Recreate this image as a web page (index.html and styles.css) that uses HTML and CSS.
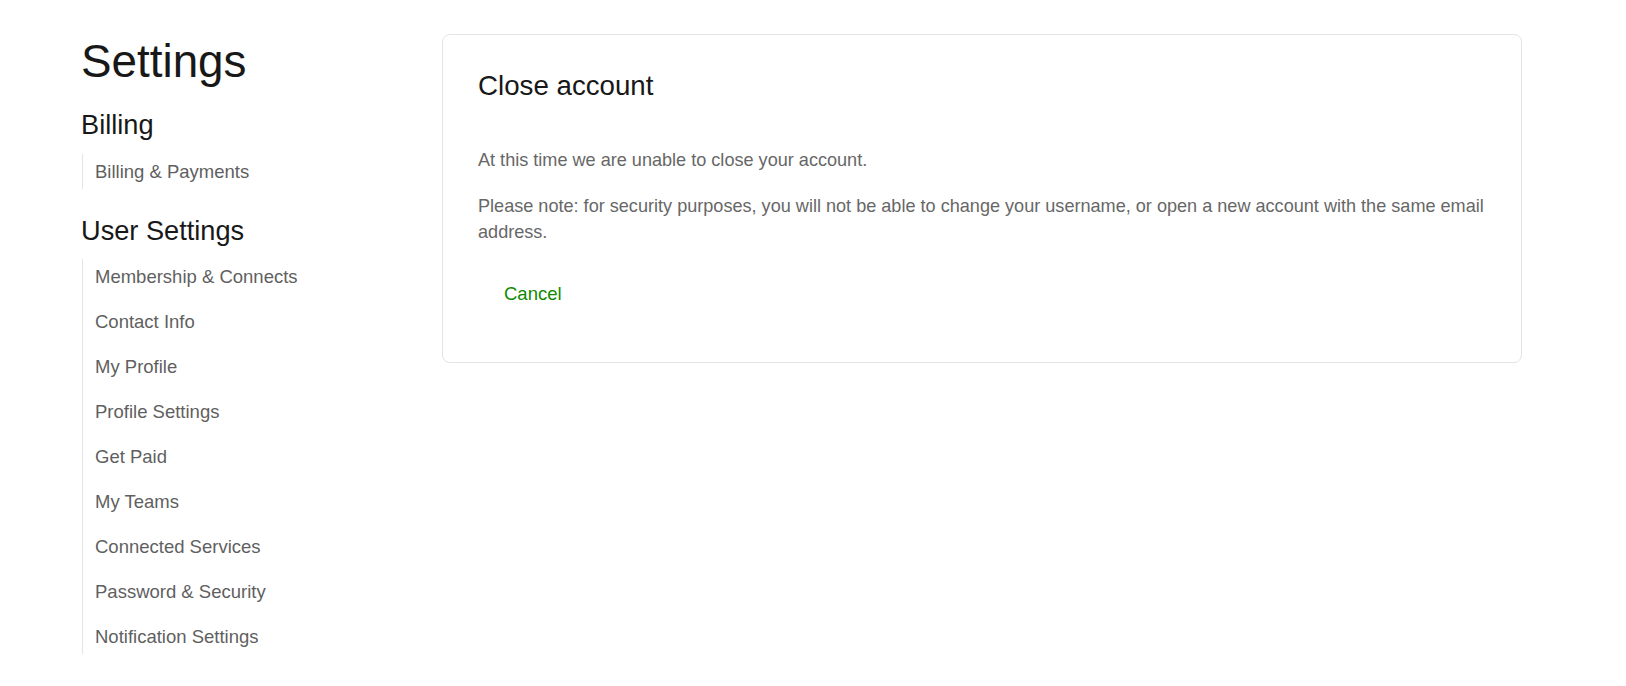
FILE: index.html
```html
<!DOCTYPE html>
<html lang="en">
<head>
<meta charset="utf-8">
<title>Settings</title>
<link rel="stylesheet" href="styles.css">
</head>
<body>
<div class="page">
  <aside class="sidebar">
    <h1 class="page-title">Settings</h1>
    <h2 class="nav-heading">Billing</h2>
    <ul class="nav-list">
      <li class="nav-item">Billing &amp; Payments</li>
    </ul>
    <h2 class="nav-heading">User Settings</h2>
    <ul class="nav-list">
      <li class="nav-item">Membership &amp; Connects</li>
      <li class="nav-item">Contact Info</li>
      <li class="nav-item">My Profile</li>
      <li class="nav-item">Profile Settings</li>
      <li class="nav-item">Get Paid</li>
      <li class="nav-item">My Teams</li>
      <li class="nav-item">Connected Services</li>
      <li class="nav-item">Password &amp; Security</li>
      <li class="nav-item">Notification Settings</li>
    </ul>
  </aside>
  <main class="content">
    <section class="card">
      <h2 class="card-title">Close account</h2>
      <p class="card-text first">At this time we are unable to close your account.</p>
      <p class="card-text">Please note: for security purposes, you will not be able to change your username, or open a new account with the same email address.</p>
      <div class="actions">
        <button class="btn-link" type="button">Cancel</button>
      </div>
    </section>
  </main>
</div>
</body>
</html>
```

FILE: styles.css
```css
* {
  box-sizing: border-box;
}

html, body {
  margin: 0;
  padding: 0;
  background: #ffffff;
}

body {
  font-family: "Liberation Sans", Arial, Helvetica, sans-serif;
  color: #181818;
}

.page {
  display: flex;
  gap: 32px;
  padding: 34px 104px 0 81px;
}

.sidebar {
  width: 329px;
  flex: 0 0 329px;
}

.page-title {
  margin: 1px 0 0;
  font-size: 45.8px;
  line-height: 54px;
  font-weight: 500;
  color: #181818;
}

.nav-heading {
  margin: 20px 0 13px;
  font-size: 27.2px;
  line-height: 32px;
  font-weight: 500;
  color: #181818;
}

.nav-list + .nav-heading {
  margin-top: 26px;
  margin-bottom: 12px;
}

.nav-list {
  list-style: none;
  margin: 0 0 0 1px;
  padding: 0;
  border-left: 1px solid #e4e4e4;
  display: flex;
  flex-direction: column;
  gap: 10px;
}

.nav-item {
  padding: 4.5px 0 4.5px 12px;
  font-size: 18.5px;
  line-height: 26px;
  color: #5f5f5f;
}

.content {
  flex: 1 1 auto;
}

.card {
  border: 1px solid #e4e4e4;
  border-radius: 8px;
  padding: 34px 22px 48px 35px;
}

.card-title {
  margin: 0;
  font-size: 27.7px;
  line-height: 34px;
  font-weight: 500;
  color: #181818;
}

.card-text {
  margin: 20px 0 0;
  font-size: 18.1px;
  line-height: 26px;
  color: #676767;
}

.card-text.first {
  margin-top: 43.5px;
}

.actions {
  margin-top: 29px;
  display: flex;
}

.btn-link {
  background: none;
  border: 0;
  padding: 0 26px;
  height: 40px;
  font-family: inherit;
  font-size: 18.5px;
  line-height: 40px;
  color: #108a00;
  cursor: pointer;
}
```
